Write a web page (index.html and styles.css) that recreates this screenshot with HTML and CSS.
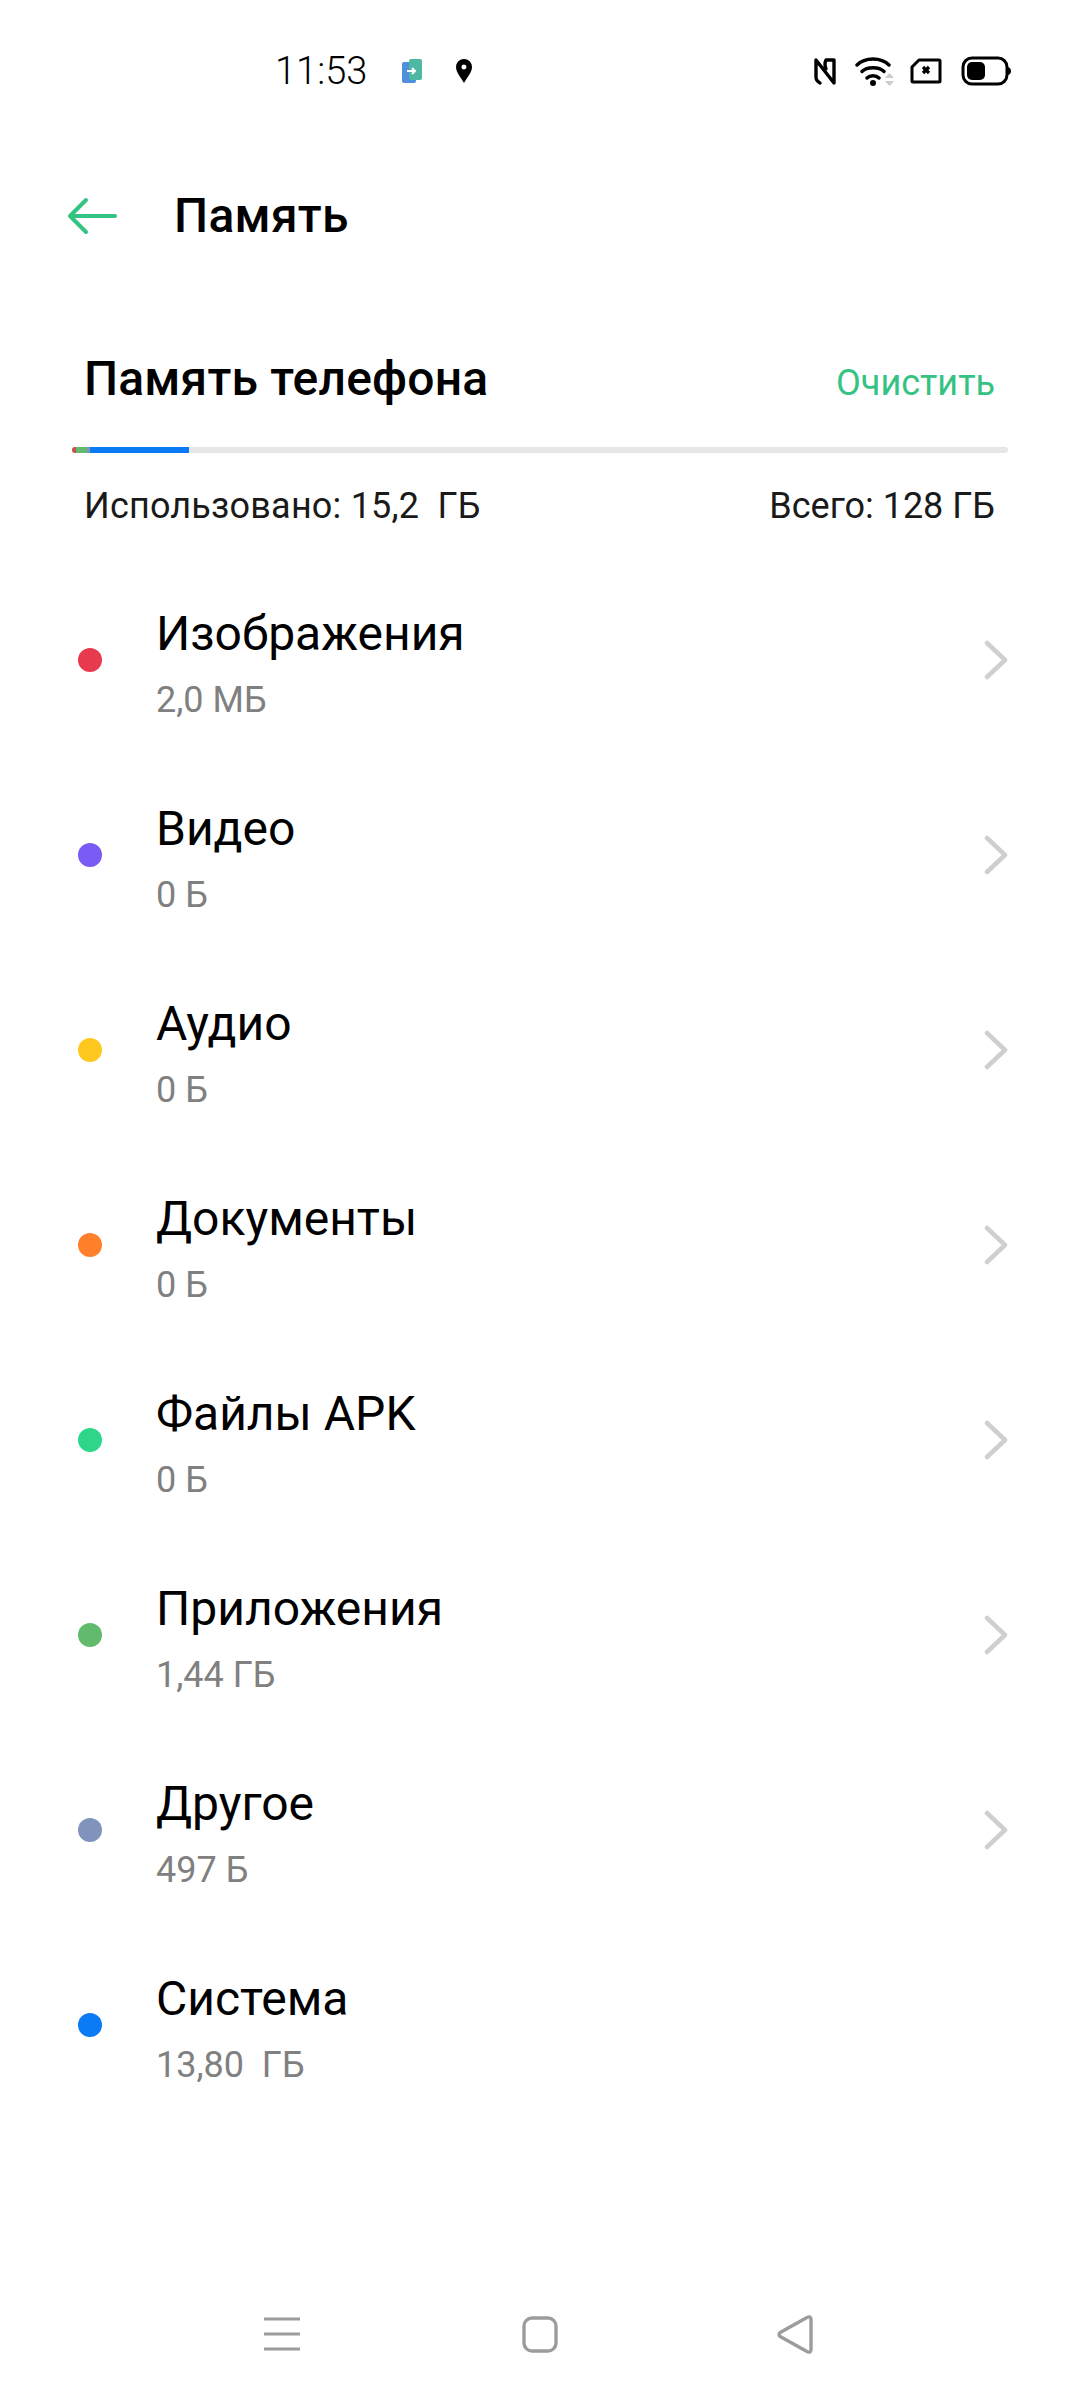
FILE: index.html
```html
<!DOCTYPE html>
<html lang="ru">
<head>
  <meta charset="UTF-8" />
  <meta name="viewport" content="width=device-width, initial-scale=1.0" />
  <title>Память</title>
  <link rel="stylesheet" href="styles.css">
</head>
<body>
  <div class="status-bar">
    <span class="time">11:53</span>
    <svg class="ic-transfer" width="22" height="26" viewBox="0 0 22 26">
      <rect x="1" y="4" width="14" height="21" rx="2" fill="#4f8fdc"/>
      <rect x="8" y="1" width="13" height="21" rx="2" fill="#4fb8a2"/>
      <path d="M6 13h8M11 10l3 3-3 3" fill="none" stroke="#fff" stroke-width="2"/>
    </svg>
    <svg class="ic-pin" width="18" height="26" viewBox="0 0 18 26">
      <path fill-rule="evenodd" d="M9 1a8 8 0 0 1 8 8c0 5-5 11-8 16C6 20 1 14 1 9a8 8 0 0 1 8-8zm0 5.500a2.500 2.500 0 1 0 0 5 2.500 2.500 0 0 0 0-5z" fill="#000"/>
    </svg>
    <div class="status-right">
      <svg width="22" height="30" viewBox="0 0 22 30">
        <path d="M6 27Q2 25 2 21V4L20 27V4H12Q10 8 12 13" fill="none" stroke="#000" stroke-width="3.400" stroke-linecap="round" stroke-linejoin="round"/>
      </svg>
      <svg class="ic-wifi" width="42" height="30" viewBox="0 0 42 30">
        <path d="M2 9C10 1 26 1 34 9M7 15.500C12 10.500 24 10.500 29 15.500M12 22C15 19 21 19 24 22" fill="none" stroke="#000" stroke-width="3.400" stroke-linecap="round"/>
        <circle cx="18" cy="27" r="3" fill="#000"/>
        <path d="M30 22l4.500-5 4.500 5zM30 25l4.500 5 4.500-5z" fill="#cccccc"/>
      </svg>
      <svg width="32" height="26" viewBox="0 0 32 26">
        <path d="M9 2h20a1 1 0 0 1 1 1v20a1 1 0 0 1-1 1H3a1 1 0 0 1-1-1V9z" fill="none" stroke="#000" stroke-width="3" stroke-linejoin="round"/>
        <path d="M13 9l6 6M19 9l-6 6" stroke="#000" stroke-width="3.200"/>
      </svg>
      <svg width="50" height="30" viewBox="0 0 50 30">
        <rect x="2" y="2" width="44" height="26" rx="9" fill="none" stroke="#000" stroke-width="3"/>
        <rect x="6" y="6" width="18" height="18" rx="5" fill="#000"/>
        <path d="M47 11q3 1 3 4t-3 4z" fill="#000"/>
      </svg>
    </div>
  </div>

  <header class="app-bar">
    <svg class="back" width="52" height="38" viewBox="0 0 52 38">
      <path d="M49 19H4M20 3 4 19l16 16" fill="none" stroke="#34c382" stroke-width="4" stroke-linecap="round" stroke-linejoin="round"/>
    </svg>
    <h1>Память</h1>
  </header>

  <section class="summary">
    <div class="summary-head">
      <h2>Память телефона</h2>
      <span class="clear">Очистить</span>
    </div>
    <div class="bar">
      <i class="seg seg-red"></i><i class="seg seg-green"></i><i class="seg seg-gray"></i><i class="seg seg-blue"></i>
    </div>
    <div class="summary-foot">
      <span class="used">Использовано: 15,2&nbsp; ГБ</span>
      <span>Всего: 128 ГБ</span>
    </div>
  </section>

  <ul class="list">
    <li class="row">
      <span class="dot dot-red"></span>
      <div class="row-text"><div class="name">Изображения</div><div class="size">2,0 МБ</div></div>
      <svg class="chev" width="24" height="40" viewBox="0 0 24 40"><path d="M3 3l18 17L3 37" /></svg>
    </li>
    <li class="row">
      <span class="dot dot-purple"></span>
      <div class="row-text"><div class="name">Видео</div><div class="size">0 Б</div></div>
      <svg class="chev" width="24" height="40" viewBox="0 0 24 40"><path d="M3 3l18 17L3 37" /></svg>
    </li>
    <li class="row">
      <span class="dot dot-yellow"></span>
      <div class="row-text"><div class="name">Аудио</div><div class="size">0 Б</div></div>
      <svg class="chev" width="24" height="40" viewBox="0 0 24 40"><path d="M3 3l18 17L3 37" /></svg>
    </li>
    <li class="row">
      <span class="dot dot-orange"></span>
      <div class="row-text"><div class="name">Документы</div><div class="size">0 Б</div></div>
      <svg class="chev" width="24" height="40" viewBox="0 0 24 40"><path d="M3 3l18 17L3 37" /></svg>
    </li>
    <li class="row">
      <span class="dot dot-mint"></span>
      <div class="row-text"><div class="name">Файлы APK</div><div class="size">0 Б</div></div>
      <svg class="chev" width="24" height="40" viewBox="0 0 24 40"><path d="M3 3l18 17L3 37" /></svg>
    </li>
    <li class="row">
      <span class="dot dot-green"></span>
      <div class="row-text"><div class="name">Приложения</div><div class="size">1,44 ГБ</div></div>
      <svg class="chev" width="24" height="40" viewBox="0 0 24 40"><path d="M3 3l18 17L3 37" /></svg>
    </li>
    <li class="row">
      <span class="dot dot-slate"></span>
      <div class="row-text"><div class="name">Другое</div><div class="size">497 Б</div></div>
      <svg class="chev" width="24" height="40" viewBox="0 0 24 40"><path d="M3 3l18 17L3 37" /></svg>
    </li>
    <li class="row">
      <span class="dot dot-blue"></span>
      <div class="row-text"><div class="name">Система</div><div class="size">13,80&nbsp; ГБ</div></div>
    </li>
  </ul>

  <nav class="nav-bar">
    <svg width="36" height="34" viewBox="0 0 36 34">
      <path d="M0 2h36M0 17h36M0 32h36" stroke="#9c9c9c" stroke-width="3"/>
    </svg>
    <svg class="nav-home" width="36" height="37" viewBox="0 0 36 37">
      <rect x="2" y="2" width="32" height="33" rx="8" fill="none" stroke="#9c9c9c" stroke-width="3.400"/>
    </svg>
    <svg width="37" height="39" viewBox="0 0 37 39">
      <path d="M4 17 30 2.500q4-2 4 2v30q0 4-4 2L4 22q-4-2.500 0-5z" fill="none" stroke="#9c9c9c" stroke-width="3.400" stroke-linejoin="round"/>
    </svg>
  </nav>
</body>
</html>
```

FILE: styles.css
```css
* {
  box-sizing: border-box;
}
html, body {
  margin: 0;
  padding: 0;
}
body {
  width: 1080px;
  height: 2400px;
  display: flex;
  flex-direction: column;
  background: #fff;
  color: #000;
  font-family: Roboto, "Noto Sans", sans-serif;
}

/* status bar */
.status-bar {
  height: 142px;
  display: flex;
  align-items: center;
  padding: 0 69px 0 275px;
}
.time {
  font-size: 38px;
  font-weight: 300;
  width: 126px;
}
.ic-pin {
  margin-left: 32px;
}
.status-right {
  margin-left: auto;
  display: flex;
  align-items: center;
  gap: 19px;
}
.ic-wifi {
  margin-right: -6px;
}

/* app bar */
.app-bar {
  height: 146px;
  margin-top: -1px;
  display: flex;
  align-items: center;
  padding: 3px 0 0 66px;
}
.app-bar h1 {
  margin: 0 0 0 56px;
  font-size: 48px;
  font-weight: 500;
  letter-spacing: 0.3px;
}

/* summary */
.summary {
  padding: 0 72px;
}
.summary-head {
  display: flex;
  justify-content: space-between;
  align-items: center;
  padding: 23px 13px 0 12px;
  height: 160px;
}
.summary-head h2 {
  margin: 0;
  font-size: 48px;
  font-weight: 500;
  letter-spacing: 0.2px;
}
.clear {
  font-size: 36px;
  margin-top: 8px;
  color: #34c382;
}
.bar {
  height: 6px;
  display: flex;
  background: #e6e6e6;
  border-radius: 3px;
  overflow: hidden;
}
.seg {
  display: block;
  height: 100%;
}
.seg-red { width: 4px; background: #c9504f; }
.seg-green { width: 11px; background: #62bb6c; }
.seg-gray { width: 3px; background: #7f93bd; }
.seg-blue { width: 99px; background: #0a7bf5; }
.summary-foot {
  display: flex;
  justify-content: space-between;
  padding: 0 13px 3px 12px;
  height: 109px;
  align-items: center;
  font-size: 36px;
  color: #1a1a1a;
}
.used {
  letter-spacing: 0.2px;
}

/* list */
.list {
  list-style: none;
  margin: 0;
  padding: 0 72px 0 78px;
}
.row {
  height: 195px;
  display: flex;
  align-items: center;
}
.dot {
  width: 24px;
  height: 24px;
  border-radius: 50%;
  flex: none;
}
.dot-red { background: #e83a4e; }
.dot-purple { background: #7a5cf5; }
.dot-yellow { background: #ffc81f; }
.dot-orange { background: #ff7f2a; }
.dot-mint { background: #2ed68a; }
.dot-green { background: #62bb6c; }
.dot-slate { background: #7f93bd; }
.dot-blue { background: #0a7bf5; }
.row-text {
  margin-left: 54px;
  padding-top: 6px;
  flex: 1;
}
.name {
  font-size: 48px;
  line-height: 56px;
}
.size {
  font-size: 36px;
  line-height: 40px;
  margin-top: 18px;
  color: #808080;
}
.chev {
  fill: none;
  stroke: #cfcfcf;
  stroke-width: 4.500;
  stroke-linecap: round;
  stroke-linejoin: round;
}

/* bottom nav */
.nav-bar {
  margin-top: auto;
  height: 118px;
  display: flex;
  align-items: center;
  padding: 0 0 14px 264px;
}
.nav-home {
  margin: 0 219px 0 222px;
}
```
